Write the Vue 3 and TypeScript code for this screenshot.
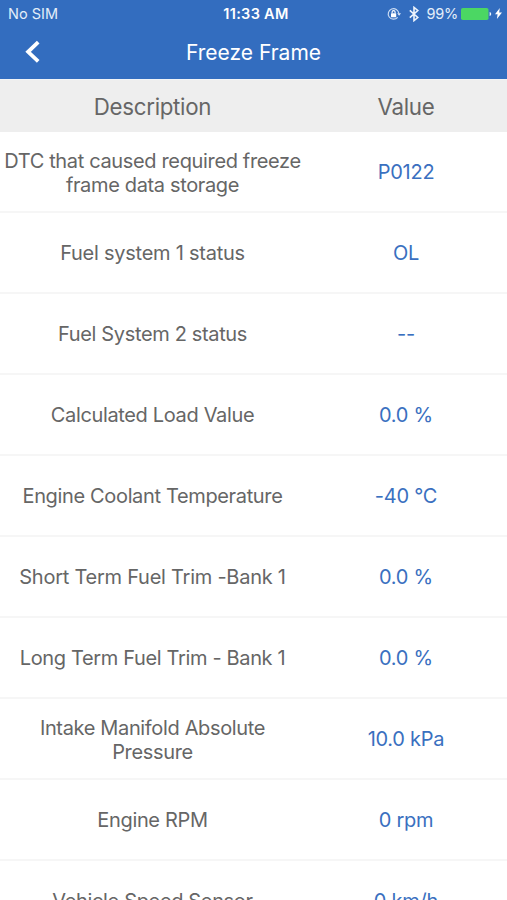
<script setup lang="ts">
interface FrameRow {
  lines: string[]
  value: string
  wide?: boolean
}

const rows: FrameRow[] = [
  { lines: ['DTC that caused required freeze', 'frame data storage'], value: 'P0122' },
  { lines: ['Fuel system 1 status'], value: 'OL', wide: true },
  { lines: ['Fuel System 2 status'], value: '--' },
  { lines: ['Calculated Load Value'], value: '0.0 %' },
  { lines: ['Engine Coolant Temperature'], value: '-40 °C' },
  { lines: ['Short Term Fuel Trim -Bank 1'], value: '0.0 %', wide: true },
  { lines: ['Long Term Fuel Trim - Bank 1'], value: '0.0 %' },
  { lines: ['Intake Manifold Absolute', 'Pressure'], value: '10.0 kPa' },
  { lines: ['Engine RPM'], value: '0 rpm' },
  { lines: ['Vehicle Speed Sensor'], value: '0 km/h' },
]
</script>

<template>
  <div class="screen">
    <header class="top">
      <div class="status">
        <span class="carrier">No SIM</span>
        <span class="clock">11:33 AM</span>
        <div class="indicators">
          <svg class="lock" width="14" height="14" viewBox="0 0 14 14" fill="none">
            <path d="M10.6 10.3A5.3 5.3 0 1 1 11.8 6.4" stroke="#cbdcf3" stroke-width="1.2" />
            <path d="M10.2 6.2H14l-1.9 2.5z" fill="#dce8f8" />
            <rect x="4" y="6.2" width="5.2" height="4" rx=".5" fill="#fff" />
            <path d="M5.1 6.3V5.1a1.5 1.5 0 0 1 3 0v1.2" stroke="#fff" stroke-width="1.1" />
          </svg>
          <svg class="bluetooth" width="10" height="16" viewBox="0 0 10 16" fill="none">
            <path d="M.8 4.3l8 7.2L5 14.6V1.4l3.8 3.1-8 7.2" stroke="#eef4fc" stroke-width="1.6" />
          </svg>
          <span class="percent">99%</span>
          <svg class="battery" width="31" height="12" viewBox="0 0 31 12">
            <rect width="27.5" height="12" rx="1.8" fill="#4bd763" />
            <path d="M28.6 4c2.1.5 2.1 3.5 0 4z" fill="#eef4fc" />
          </svg>
          <svg class="bolt" width="7" height="11" viewBox="0 0 7 11">
            <path d="M4.8 0L0 6.2h2.6L1.9 11 7 4.4H4.2z" fill="#fff" />
          </svg>
        </div>
      </div>
      <nav class="nav">
        <button class="back" aria-label="Back">
          <svg width="16" height="24" viewBox="0 0 16 24" fill="none">
            <path d="M14.2 2.2L4.1 11.8l10.1 9.5" stroke="#fff" stroke-width="3.8" />
          </svg>
        </button>
        <h1 class="title">Freeze Frame</h1>
      </nav>
    </header>
    <div class="row heading">
      <span class="cell">Description</span>
      <span class="cell">Value</span>
    </div>
    <main>
      <div v-for="row in rows" :key="row.lines[0]" class="row item">
        <div class="cell desc" :class="{ wide: row.wide, double: row.lines.length > 1 }">
          <span v-for="line in row.lines" :key="line">{{ line }}</span>
        </div>
        <div class="cell value">{{ row.value }}</div>
      </div>
    </main>
  </div>
</template>

<style>
body {
  margin: 0;
  overflow: hidden;
}
</style>

<style scoped>
.screen {
  height: 900px;
  overflow: hidden;
  background: #fff;
  color: #666;
  font-family: Inter, 'Liberation Sans', sans-serif;
}
.top {
  height: 79px;
  background: #336dbf;
  color: #fff;
}
.status {
  display: grid;
  grid-template-columns: 1fr auto 1fr;
  align-items: center;
  height: 27px;
  padding: 0 5px 0 8px;
  font-size: 14.5px;
  line-height: 27px;
}
.carrier {
  color: #e3edf9;
}
.clock {
  padding-left: 2px;
  font-weight: 600;
  letter-spacing: 0.3px;
}
.indicators {
  display: flex;
  align-items: center;
  justify-content: flex-end;
}
.bluetooth {
  margin-left: 8px;
}
.percent {
  margin: 0 3px 0 7px;
  color: #e3edf9;
  letter-spacing: -0.2px;
}
.bolt {
  margin-left: 3px;
}
.nav {
  display: grid;
  grid-template-columns: 60px 1fr 60px;
  align-items: center;
  height: 50px;
}
.back {
  display: flex;
  padding: 0 0 0 24px;
  border: 0;
  background: none;
}
.title {
  margin: 0;
  padding-top: 1px;
  font-size: 21px;
  font-weight: 400;
  line-height: 49px;
  text-align: center;
}
.row {
  display: grid;
  grid-template-columns: 305px 1fr;
  box-sizing: border-box;
}
.heading {
  height: 53px;
  padding-top: 1px;
  background: #eee;
  font-size: 22.3px;
  line-height: 52px;
  letter-spacing: -0.3px;
  border-top: 1px solid #f2f4f7;
}
.item {
  height: 81px;
  padding-top: 1px;
  border-bottom: 2px solid #f6f6f6;
  font-size: 20px;
  line-height: 24px;
  letter-spacing: -0.35px;
}
.cell {
  display: flex;
  flex-direction: column;
  align-items: center;
  justify-content: center;
  white-space: nowrap;
}
.wide {
  letter-spacing: -0.25px;
}
.double {
  padding-top: 1px;
}
.value {
  color: #3a70c0;
  letter-spacing: -0.25px;
}
</style>
